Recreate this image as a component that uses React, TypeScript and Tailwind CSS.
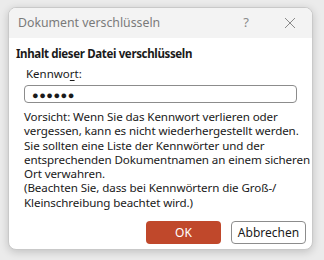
import React from "react";

export default function App() {
  const font = { fontFamily: '"Noto Sans", "Open Sans", sans-serif' };
  const lines = [
    "Vorsicht: Wenn Sie das Kennwort verlieren oder",
    "vergessen, kann es nicht wiederhergestellt werden.",
    "Sie sollten eine Liste der Kennwörter und der",
    "entsprechenden Dokumentnamen an einem sicheren",
    "Ort verwahren.",
    "(Beachten Sie, dass bei Kennwörtern die Groß-/",
    "Kleinschreibung beachtet wird.)",
  ];
  return (
    <div className="w-[324px] h-[260px] bg-[#ebebeb] pt-[7px] pl-[8px]" style={font}>
      <div className="w-[305px] h-[243px] rounded-[8px] border border-[#c9c9c9] bg-white overflow-hidden shadow-[0_2px_8px_rgba(0,0,0,0.18)] flex flex-col">
        <div className="h-[30px] bg-[#f3f3f3] flex items-center pl-[9px] pr-[14px] text-[#7a7a7a] text-[12.3px]">
          <span className="flex-1">Dokument verschlüsseln</span>
          <span className="text-[13px] mr-[35px] text-[#8a8a8a]">?</span>
          <svg width="12" height="12" viewBox="0 0 12 12" className="mr-[2px]">
            <path d="M1 1 L11 11 M11 1 L1 11" stroke="#8a8a8a" strokeWidth="1" />
          </svg>
        </div>
        <div className="flex flex-col pl-[7px] pr-[6px]">
          <div className="mt-[8px] text-[11.5px] font-bold text-[#1a1a1a] leading-[16px] tracking-[-0.35px]">
            Inhalt dieser Datei verschlüsseln
          </div>
          <div className="mt-[5px] pl-[10px] text-[11.5px] text-[#1a1a1a] leading-[14px]">
            Kennwo<span className="underline underline-offset-2">r</span>t:
          </div>
          <div className="mt-[4px] ml-[8px] w-[273px] h-[18px] rounded-[4px] border border-[#8c8c8c] flex items-center pl-[7px]">
            <span className="text-[11px] tracking-[0.5px] text-[#1a1a1a] leading-none">●●●●●●</span>
          </div>
          <div className="mt-[7px] pl-[8px] text-[11.6px] leading-[14.3px] text-[#1a1a1a] whitespace-nowrap tracking-[-0.1px] flex flex-col">
            {lines.map((l) => (
              <div key={l}>{l}</div>
            ))}
          </div>
          <div className="mt-[11px] flex justify-end gap-[10px]">
            <button className="w-[75px] h-[23px] rounded-[4px] bg-[#c0482b] text-white text-[12px]">OK</button>
            <button className="w-[75px] h-[23px] rounded-[4px] bg-white border border-[#8c8c8c] text-[#1a1a1a] text-[12px]">
              Abbrechen
            </button>
          </div>
        </div>
      </div>
    </div>
  );
}
